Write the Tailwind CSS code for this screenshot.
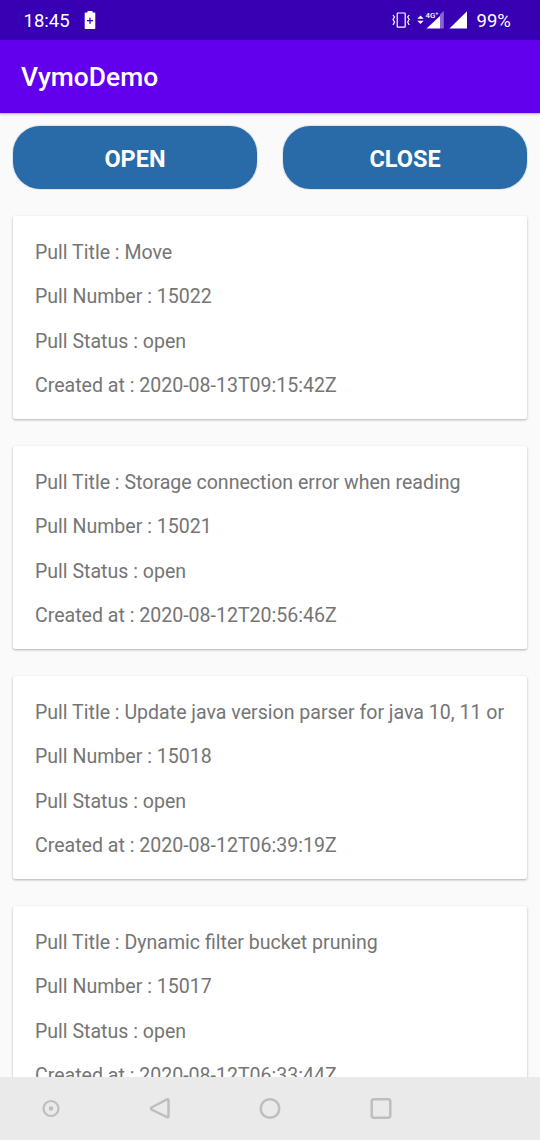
<!DOCTYPE html>
<html lang="en">
<head>
<meta charset="utf-8">
<title>VymoDemo</title>
<script src="https://cdn.jsdelivr.net/npm/@tailwindcss/browser@4"></script>
</head>
<body class="w-[540px] h-[1140px] overflow-hidden bg-[#fafafa] font-['Roboto',sans-serif] flex flex-col">
<div class="h-10 shrink-0 bg-[#3700b3] text-white flex items-center pl-[23.500px]">
  <span class="text-[18.5px] leading-10 pt-px w-[60.500px] whitespace-nowrap">18:45</span>
  <svg class="w-3 h-5" viewBox="0 0 12 20"><path fill="#fff" d="M3.5 1h5v1.500h2q.8 0 .8.8v15q0 .8-.8.8h-9q-.8 0-.8-.8v-15q0-.8.800-.8h2z"/><path d="M6 7.700v6M3 10.700h6" stroke="#3700b3" stroke-width="1.300"/></svg>
  <svg class="ml-[294px] w-[80px] h-10" viewBox="390 0 80 40">
    <rect x="397.200" y="13" width="8" height="14.200" rx=".6" fill="none" stroke="#fff" stroke-width="1.200"/>
    <path d="M393 15l1.500 2-1.500 2.500 1.500 2.500-1.500 3M409.200 15l-1.500 2 1.500 2.500-1.500 2.500 1.500 3" fill="none" stroke="#fff" stroke-width="1.200"/>
    <path d="M417.300 18.700l3.200-3.200 3.200 3.200zM417.300 20.800l3.200 3.200 3.200-3.200z" fill="#fff"/>
    <path d="M440 14.500l3.800-3.500v17.500H440z" fill="#fff" opacity=".4"/>
    <path d="M426.500 28.500L440 16v12.500z" fill="#fff"/>
    <text x="425.500" y="17.500" font-size="8" font-weight="500" fill="#fff" textLength="13" lengthAdjust="spacingAndGlyphs" stroke="#3700b3" stroke-width="1" paint-order="stroke">4G⁺</text>
    <path d="M449.500 28.500L467 11.200v17.300z" fill="#fff"/>
  </svg>
  <span class="text-[18.5px] leading-10 pt-px ml-[6.500px]">99%</span>
</div>
<header class="h-[73px] shrink-0 bg-[#6200ee] text-white flex items-center pl-[21px] pt-[3.500px] shadow-[0_1px_3px_rgba(0,0,0,0.25)]">
  <h1 class="text-[26.400px] font-medium">VymoDemo</h1>
</header>
<main class="flex-1 min-h-0 overflow-hidden">
  <div class="h-px bg-[#cfb4f5]"></div>
  <div class="flex gap-[26px] px-[13px] pt-[12.400px]">
    <button class="flex-1 h-[63px] rounded-[27px] bg-[#296aa8] text-white text-[23.500px] font-bold pt-1 shadow-[0_0_1px_1px_rgba(41,106,168,0.15)]">OPEN</button>
    <button class="flex-1 h-[63px] rounded-[27px] bg-[#296aa8] text-white text-[23.500px] font-bold pt-1 shadow-[0_0_1px_1px_rgba(41,106,168,0.15)]">CLOSE</button>
  </div>
  <div id="list" class="flex flex-col gap-[26.500px] px-[13px] pt-[26.600px] text-[19.560px] text-[#757575]"></div>
</main>
<nav class="h-[63px] shrink-0 bg-[#eaeaea]">
  <svg class="w-[540px] h-[63px]" viewBox="0 1077 540 63" fill="none" stroke="#bebebe" stroke-width="2.500">
    <circle cx="51" cy="1108.500" r="7.500" stroke-width="2.200"/><circle cx="51" cy="1108.500" r="2.300" fill="#bebebe" stroke="none"/>
    <path d="M151.500 1107.500L167 1099.300q1.500-.6 1.500 1v15.800q0 1.700-1.500 1L151.500 1109.500q-1.200-1 0-2z"/>
    <circle cx="270" cy="1108.500" r="9.300"/>
    <rect x="371.700" y="1099.200" width="18.600" height="18.600" rx="2.200"/>
  </svg>
</nav>
<script>
const pulls = [
  ['Move', '15022', '2020-08-13T09:15:42Z'],
  ['Storage connection error when reading', '15021', '2020-08-12T20:56:46Z'],
  ['Update java version parser for java 10, 11 or', '15018', '2020-08-12T06:39:19Z'],
  ['Dynamic filter bucket pruning', '15017', '2020-08-12T06:33:44Z']
];
document.getElementById('list').innerHTML = pulls.map(([title, number, created]) => `
  <article class="h-[203.500px] shrink-0 bg-white rounded-[2.500px] pl-[22px] pt-[15px] whitespace-nowrap shadow-[0_1px_2.500px_rgba(0,0,0,0.3)]">
    <p class="h-[44.500px] leading-[44.500px]">Pull Title : ${title}</p>
    <p class="h-[44.500px] leading-[44.500px]">Pull Number : ${number}</p>
    <p class="h-[44.500px] leading-[44.500px]">Pull Status : open</p>
    <p class="h-[44.500px] leading-[44.500px]">Created at : ${created}</p>
  </article>`).join('');
</script>
</body>
</html>
